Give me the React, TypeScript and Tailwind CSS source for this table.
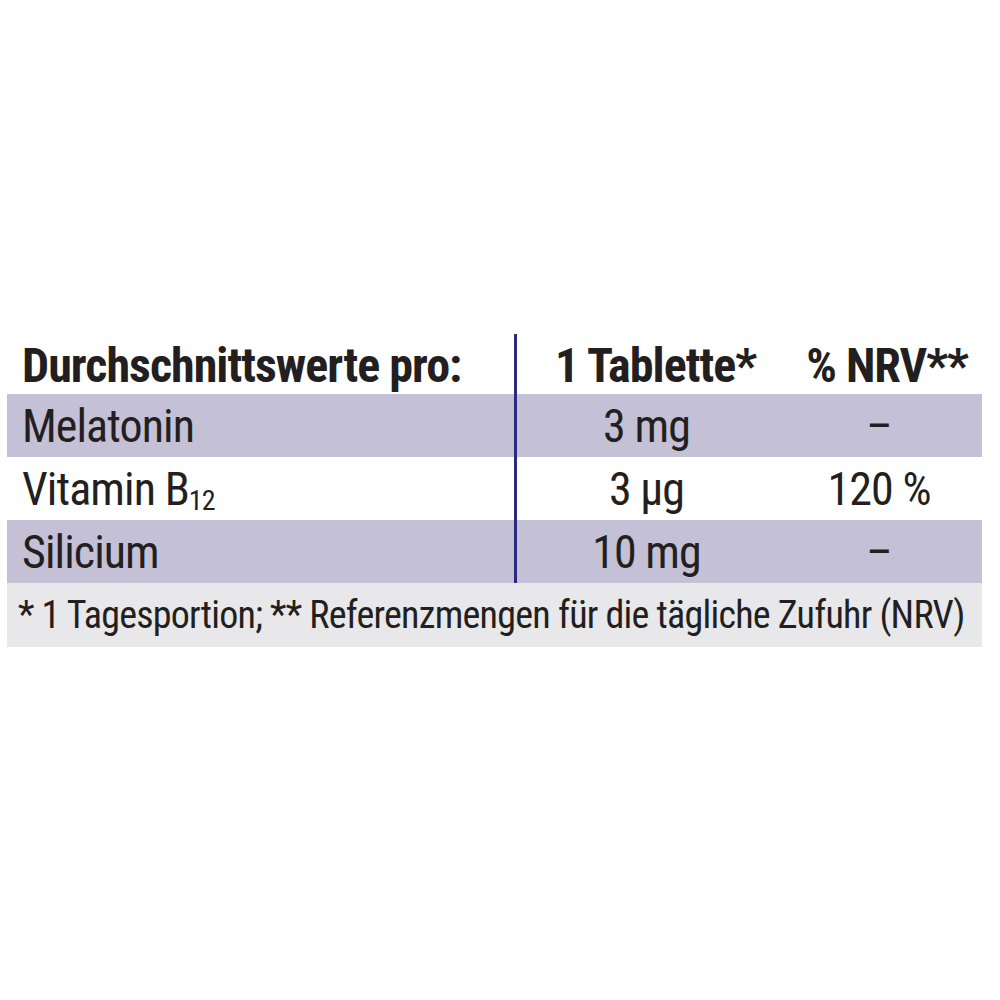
const rows = [
  { name: "Melatonin", amount: "3 mg", nrv: "–", shaded: true },
  { name: "Vitamin B", sub: "12", amount: "3 µg", nrv: "120 %", shaded: false },
  { name: "Silicium", amount: "10 mg", nrv: "–", shaded: true },
];

export default function App() {
  return (
    <div
      className="flex h-[1000px] w-[1000px] flex-col bg-white pl-[7px] pt-[334px] text-[#231f20]"
      style={{ fontFamily: "'Roboto Condensed', 'Liberation Sans', sans-serif" }}
    >
      <div className="grid w-[975px] grid-cols-[507px_262px_206px]">
        {/* header */}
        <div className="flex h-[60px] items-center pl-[15px] pt-[4px] text-[48px] font-bold leading-none tracking-[-0.02em] whitespace-nowrap">
          Durchschnittswerte pro:
        </div>
        <div className="flex h-[60px] items-center justify-center border-l-[3px] border-[#2c2a7c] pt-[4px] pl-[18px] text-[48px] font-bold leading-none tracking-[-0.02em] whitespace-nowrap">
          1 Tablette*
        </div>
        <div className="flex h-[60px] items-center justify-center pt-[4px] pl-[16px] text-[48px] font-bold leading-none tracking-[-0.02em] whitespace-nowrap">
          % NRV**
        </div>

        {rows.map((r) => {
          const bg = r.shaded ? "bg-[#c4c0d6]" : "bg-white";
          return [
            <div
              key={r.name + "a"}
              className={`${bg} flex h-[63px] items-center pl-[15px] text-[46px] leading-none tracking-[-0.02em] whitespace-nowrap`}
            >
              {r.name}
              {r.sub && <sub className="bottom-[-12px] text-[28px]">{r.sub}</sub>}
            </div>,
            <div
              key={r.name + "b"}
              className={`${bg} flex h-[63px] items-center justify-center border-l-[3px] border-[#2c2a7c] text-[46px] leading-none tracking-[-0.02em] whitespace-nowrap`}
            >
              {r.amount}
            </div>,
            <div
              key={r.name + "c"}
              className={`${bg} flex h-[63px] items-center justify-center text-[46px] leading-none tracking-[-0.02em] whitespace-nowrap`}
            >
              {r.nrv}
            </div>,
          ];
        })}
      </div>
      <div className="flex h-[64px] w-[975px] items-center bg-[#e8e8ea] pl-[11px] text-[38px] leading-none tracking-[-0.02em] whitespace-nowrap">
        * 1 Tagesportion; ** Referenzmengen für die tägliche Zufuhr (NRV)
      </div>
    </div>
  );
}
